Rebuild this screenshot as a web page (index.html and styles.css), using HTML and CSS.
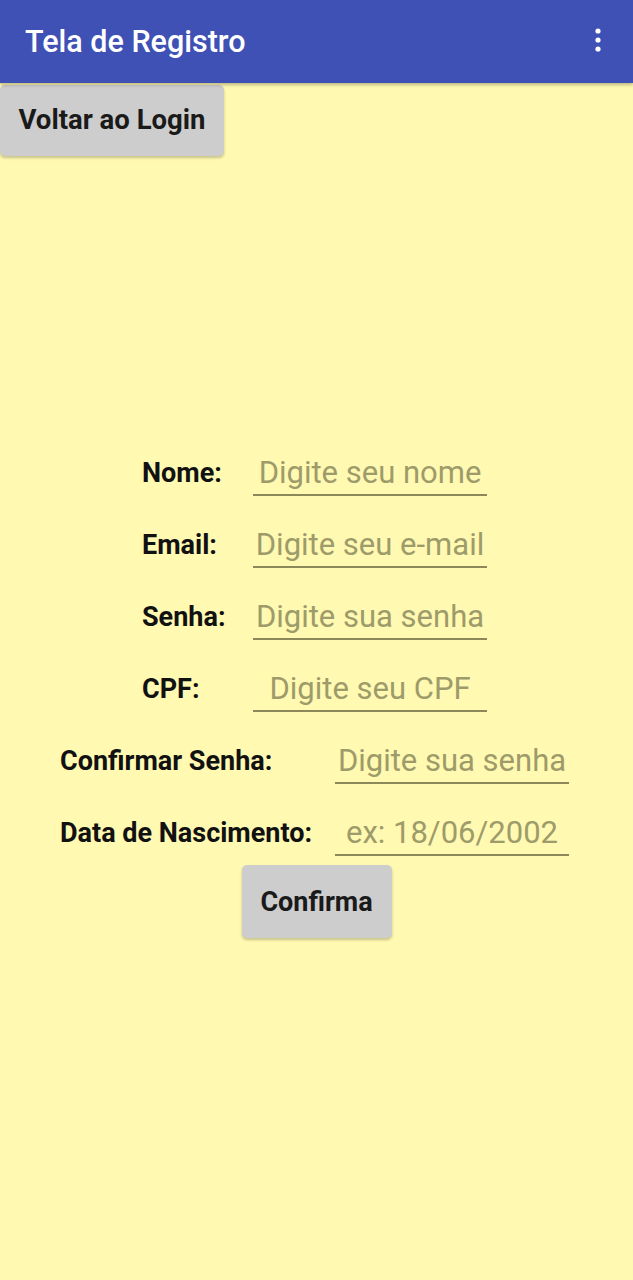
FILE: index.html
```html
<!DOCTYPE html>
<html lang="pt">
<head>
<meta charset="utf-8">
<title>Tela de Registro</title>
<link rel="stylesheet" href="styles.css">
</head>
<body>
<header class="appbar">
  <h1 class="appbar-title">Tela de Registro</h1>
  <svg class="kebab" width="8" height="26" viewBox="0 0 8 26" aria-hidden="true">
    <circle cx="4" cy="4" r="2.6" fill="#fff"/>
    <circle cx="4" cy="13" r="2.6" fill="#fff"/>
    <circle cx="4" cy="22" r="2.6" fill="#fff"/>
  </svg>
</header>
<main class="content">
  <button class="btn btn-back">Voltar ao Login</button>
  <form class="form">
    <div class="row row-short">
      <label class="label">Nome:</label>
      <input class="field" type="text" placeholder="Digite seu nome">
    </div>
    <div class="row row-short">
      <label class="label">Email:</label>
      <input class="field" type="text" placeholder="Digite seu e-mail">
    </div>
    <div class="row row-short">
      <label class="label">Senha:</label>
      <input class="field" type="text" placeholder="Digite sua senha">
    </div>
    <div class="row row-short">
      <label class="label">CPF:</label>
      <input class="field" type="text" placeholder="Digite seu CPF">
    </div>
    <div class="row row-long">
      <label class="label">Confirmar Senha:</label>
      <input class="field" type="text" placeholder="Digite sua senha">
    </div>
    <div class="row row-long">
      <label class="label">Data de Nascimento:</label>
      <input class="field" type="text" placeholder="ex: 18/06/2002">
    </div>
    <button class="btn btn-confirm" type="button">Confirma</button>
  </form>
</main>
</body>
</html>
```

FILE: styles.css
```css
* { box-sizing: border-box; }
html, body { margin: 0; padding: 0; }
body {
  width: 633px;
  height: 1280px;
  background: #FFF9B1;
  font-family: Roboto, "Noto Sans", sans-serif;
  overflow: hidden;
}
.appbar {
  height: 83px;
  background: #3F51B5;
  display: flex;
  align-items: center;
  justify-content: space-between;
  padding: 0 31px 0 25px;
  box-shadow: 0 2px 3px rgba(0,0,0,0.25);
  position: relative;
  z-index: 1;
}
.appbar-title {
  margin: 0;
  color: #fff;
  font-size: 30.5px;
  font-weight: 500;
  margin-top: -1px;
}
.kebab { margin-top: -4px; }
.content {
  display: flex;
  flex-direction: column;
  align-items: flex-start;
}
.btn {
  border: none;
  background: #CDCDCD;
  color: #1a1a1a;
  font-family: Roboto, "Noto Sans", sans-serif;
  font-weight: 700;
  font-size: 27px;
  border-radius: 5px;
  box-shadow: 0 2px 3px rgba(0,0,0,0.22);
}
.btn-back {
  margin-top: 2px;
  width: 224px;
  height: 71px;
  padding: 0 0 2px 0;
  font-size: 27.5px;
}
.form {
  align-self: stretch;
  margin-top: 292px;
  display: flex;
  flex-direction: column;
  gap: 24px;
}
.row {
  display: flex;
  align-items: center;
}
.row-short { padding-left: 142px; }
.row-short .label { width: 111px; }
.row-long { padding-left: 60px; }
.row-long .label { width: 275px; }
.label {
  font-weight: 700;
  font-size: 27px;
  color: #111;
  padding-top: 2px;
}
.field {
  width: 234px;
  height: 48px;
  border: none;
  border-bottom: 2px solid #8C885A;
  background: transparent;
  padding: 2px 0 0 0;
  text-align: center;
  font-family: Roboto, "Noto Sans", sans-serif;
  font-size: 31px;
  color: #222;
  outline: none;
}
.field::placeholder { color: #9E9B6A; opacity: 1; }
.btn-confirm {
  align-self: center;
  margin-top: -15px;
  width: 150px;
  height: 73px;
}
```
